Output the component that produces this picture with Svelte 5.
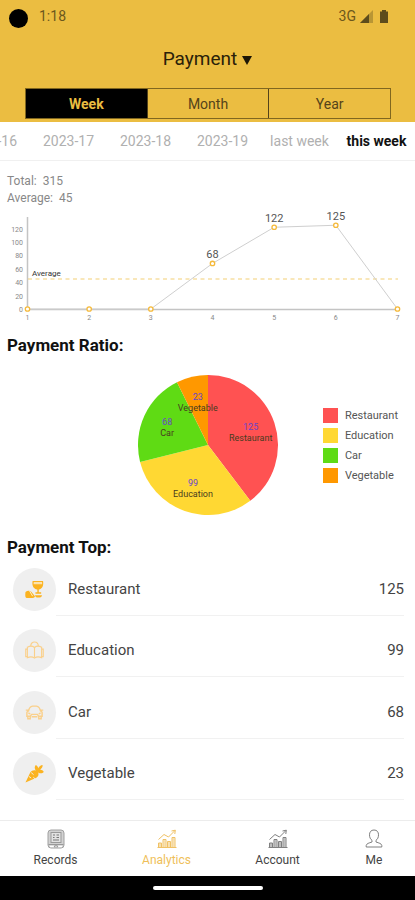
<script>
  const periods = ['Week', 'Month', 'Year'];
  const weeks = ['2023-16', '2023-17', '2023-18', '2023-19', 'last week', 'this week'];
  const daily = [0, 0, 0, 68, 122, 125, 0];
  const ticks = [0, 20, 40, 60, 80, 100, 120];
  const categories = [
    { name: 'Restaurant', value: 125, color: '#ff5252' },
    { name: 'Education', value: 99, color: '#ffd833' },
    { name: 'Car', value: 68, color: '#5fdb14' },
    { name: 'Vegetable', value: 23, color: '#ff9800' }
  ];
  const tabs = ['Records', 'Analytics', 'Account', 'Me'];

  let period = $state('Week');
  let week = $state('this week');
  let tab = $state('Analytics');

  const px = (i) => 27.5 + (i * 370) / 6;
  const py = (v) => 99 - v * 0.67;
  const line = daily.map((v, i) => `${px(i)},${py(v)}`).join(' ');

  const radius = 70;
  const sum = categories.reduce((s, c) => s + c.value, 0);
  const point = (turn, r) => {
    const a = turn * Math.PI * 2;
    return [radius + r * Math.sin(a), radius - r * Math.cos(a)];
  };
  let run = 0;
  const slices = categories.map((c) => {
    const start = run / sum;
    run += c.value;
    const end = run / sum;
    const [x1, y1] = point(start, radius);
    const [x2, y2] = point(end, radius);
    const [tx, ty] = point((start + end) / 2, 45);
    return { ...c, tx, ty, d: `M70 70L${x1} ${y1}A70 70 0 0 1 ${x2} ${y2}Z` };
  });
</script>

<div class="app">
  <header>
    <div class="status">
      <span class="camera"></span>
      <span class="time">1:18</span>
      <span class="net">3G</span>
      <svg class="signal" width="13" height="13" viewBox="0 0 13 13">
        <path d="M0 13L13 0V13Z" fill="#5d4c1c" opacity=".35" />
        <path d="M0 13L9 4V13Z" fill="#5d4c1c" />
      </svg>
      <svg width="8" height="13" viewBox="0 0 8 13">
        <path d="M2 0H6V1.500H8V13H0V1.500H2Z" fill="#5d4c1c" />
      </svg>
    </div>
    <label class="kind">
      <select aria-label="Record type"><option>Payment</option></select>
      <svg width="10" height="9" viewBox="0 0 10 9"><path d="M0 0H10L5 9Z" fill="#1c1605" /></svg>
    </label>
    <div class="segments">
      {#each periods as p}
        <button class:on={period === p} onclick={() => (period = p)}>{p}</button>
      {/each}
    </div>
  </header>

  <div class="weeks">
    {#each weeks as w}
      <button class:on={week === w} onclick={() => (week = w)}>{w}</button>
    {/each}
  </div>

  <main>
    <p class="totals">Total: &nbsp;315<br />Average: &nbsp;45</p>

    <svg class="chart" viewBox="0 0 415 118">
      <path d="M27.500 7V99.500H397.500" fill="none" stroke="#c4c4c4" stroke-width="1.500" />
      {#each ticks as t}
        <text class="tick" x="23" y={py(t) + 3} text-anchor="end">{t}</text>
      {/each}
      <path d="M28 69H398" stroke="#f3cf74" stroke-dasharray="4 3.500" />
      <text class="avg" x="32" y="66">Average</text>
      <polyline points={line} fill="none" stroke="#cfcfcf" />
      {#each daily as v, i}
        <text class="tick" x={px(i)} y="110" text-anchor="middle">{i + 1}</text>
        <circle cx={px(i)} cy={py(v)} r="2.200" fill="#fff" stroke="#f5b93a" stroke-width="1.300" />
        {#if v}
          <text class="val" x={px(i)} y={py(v) - 5} text-anchor="middle">{v}</text>
        {/if}
      {/each}
    </svg>

    <h2>Payment Ratio:</h2>
    <div class="ratio">
      <svg class="pie" width="140" height="140" viewBox="0 0 140 140">
        {#each slices as s}
          <path d={s.d} fill={s.color} />
        {/each}
        {#each slices as s}
          <text class="num" x={s.tx} y={s.ty - 1} text-anchor="middle">{s.value}</text>
          <text x={s.tx} y={s.ty + 10} text-anchor="middle">{s.name}</text>
        {/each}
      </svg>
      <ul class="legend">
        {#each categories as c}
          <li><i style="background:{c.color}"></i>{c.name}</li>
        {/each}
      </ul>
    </div>

    <h2>Payment Top:</h2>
    <ul class="top">
      {#each categories as c}
        <li>
          <span class="badge">
            <svg width="19" height="19" viewBox="0 0 20 20">
              {#if c.name === 'Restaurant'}
                <g fill="#fbb321">
                  <path d="M8 1H19C19.800 6 18.300 9.300 14.500 10V13H17V14.500H11V13H13V10C8.700 9.300 7.200 6 8 1Z" />
                  <path d="M9.200 2H17.900L18.100 4.500H9Z" fill="#fde3ac" />
                  <path d="M.5 12.500C3 10.800 5.500 11.200 7 13L10.500 17C10.200 18.500 8.500 19 6.500 19H2C.5 19 .2 17.500 .3 15Z" />
                  <path d="M4.500 11L8 17" stroke="#fff0cf" stroke-width="1" />
                  <path d="M10.500 16H18C17.500 18 16 18.500 14 18.500C12 18.500 11 18 10.500 16Z" />
                </g>
              {:else if c.name === 'Education'}
                <g fill="none" stroke="#fad08b" stroke-width="1.200">
                  <path d="M6 5.500C6 -.5 14 -.5 14 5.500" />
                  <path d="M2.500 6.500C5 5.200 8 5.200 10 6.800C12 5.200 15 5.200 17.500 6.500V17.500C15 16.500 12 16.500 10 18C8 16.500 5 16.500 2.500 17.500Z" />
                  <path d="M10 7V17.500M2.500 8.500H.8V16.500H2.500M17.500 8.500H19.200V16.500H17.500" />
                </g>
              {:else if c.name === 'Car'}
                <g fill="none" stroke="#fad08b" stroke-width="1.500">
                  <path d="M3.500 9C4.300 5 5.500 3.500 8 3.300H12C14.500 3.500 15.700 5 16.500 9" />
                  <path d="M.8 7.500H3.500L2 10V14H5.500L7 12H13L14.500 14H18V10L16.500 7.500H19.200" />
                  <path d="M3 14V16.500H5.500V14M14.500 14V16.500H17V14" />
                  <path d="M3.500 10.500L5.500 11.500M16.500 10.500L14.500 11.500M7 14.500H13" />
                </g>
              {:else}
                <path d="M.5 19.500L5.500 9C7.500 6 11 5.800 13.200 8C15 10.200 14.300 13 12 14.500Z" fill="#fbb321" />
                <path d="M12.200 7.800C9.500 5 10 2.500 11.500 1C13 1.800 13.800 3 13.800 4.600C15 2.500 16.500 1.200 18.500 1C18.800 3 17.500 4.800 15.700 6.200C17.500 6 19 6.800 19.800 8.300C18 10.200 15.500 10.500 12.200 7.800Z" fill="#fbb321" />
                <path d="M6.500 9L9 11.200M4 13L6.500 14.800M10.500 15.500L8.800 14" stroke="#efefef" stroke-width="1" />
              {/if}
            </svg>
          </span>
          <div class="row"><span>{c.name}</span><span>{c.value}</span></div>
        </li>
      {/each}
    </ul>
  </main>

  <nav>
    {#each tabs as t}
      <a href="#{t.toLowerCase()}" class:on={tab === t} class:last={t === 'Me'} onclick={() => (tab = t)}>
        <svg width="20" height="20" viewBox="0 0 20 20" fill="none" stroke={tab === t ? '#f0c164' : '#808080'}>
          {#if t === 'Records'}
            <rect x="2" y="1" width="16" height="18" rx="3" fill="#d2d2d2" stroke="#a0a0a0" />
            <rect x="5" y="3.500" width="10" height="10" fill="#e2e2e2" stroke="#999" />
            <path d="M7 6H9M10.500 6H13M7 8.500H8.500M10.500 8.500H13M7 11H13" stroke="#777" />
            <path d="M2.500 15.500H17.500" stroke="#999" />
            <path d="M4 17.500H8M12 17.500H16" stroke="#fff" stroke-width="1.500" />
            <path d="M8 18L10 15.500L12 18" stroke="#999" />
          {:else if t === 'Me'}
            <path d="M10 1C7 1 5.500 3 5.500 5.800C5.500 8.500 6.500 10.300 8 11.300V13C5 14 2.500 14.500 2.200 16.500V18H17.800V16.500C17.500 14.500 15 14 12 13V11.300C13.500 10.300 14.500 8.500 14.500 5.800C14.500 3 13 1 10 1Z" />
          {:else}
            <path d="M1.500 18.500V14H4.500V18.500M6 18.500V10.500H9V18.500M10.500 18.500V12.500H13.500V18.500M15 18.500V8.500H18V18.500M.5 18.500H19.500" />
            <path d="M3 14V18M7.500 11V18M12 13V18M16.500 9V18" stroke-width="2" opacity=".5" />
            <path d="M1.500 10.500L7 5.500L11.500 8L18 1.500M14.500 2L18.300 1.200L17.800 5" />
          {/if}
        </svg>
        <span>{t}</span>
      </a>
    {/each}
  </nav>
  <div class="gesture"><i></i></div>
</div>

<style>
  :global(body) {
    margin: 0;
    background: #fff;
  }
  .app {
    display: flex;
    flex-direction: column;
    min-height: 100vh;
    font-family: Roboto, 'Liberation Sans', sans-serif;
    color: #333;
    background: #fff;
  }
  button,
  select {
    font: inherit;
    color: inherit;
    border: 0;
    padding: 0;
    background: none;
    cursor: pointer;
  }
  ul,
  p,
  h2 {
    margin: 0;
    padding: 0;
    list-style: none;
  }
  header {
    background: #ebbd41;
    padding-bottom: 3px;
  }
  .status {
    display: flex;
    align-items: center;
    height: 32px;
    padding: 0 27px 0 9px;
    color: #6b571c;
    font-size: 14px;
  }
  .camera {
    width: 19px;
    height: 19px;
    margin-top: 4px;
    border-radius: 50%;
    background: #000;
  }
  .time {
    margin-left: 11px;
    margin-right: auto;
  }
  .signal {
    margin: 0 7px 0 4px;
  }
  .kind {
    display: flex;
    justify-content: center;
    align-items: center;
    gap: 5px;
    height: 56px;
    box-sizing: border-box;
    padding-bottom: 3px;
    color: #2a2109;
    font-size: 19px;
  }
  .kind select {
    appearance: none;
    field-sizing: content;
  }
  .kind svg {
    margin-top: 3px;
  }
  .segments {
    display: flex;
    height: 31px;
    box-sizing: border-box;
    margin: 0 24px 0 25px;
    border: 1px solid #80671f;
  }
  .segments button {
    flex: 1;
    color: #54431a;
    font-size: 14px;
  }
  .segments button + button {
    border-left: 1px solid #54431a;
  }
  .segments button.on {
    background: #000;
    color: #ebbd41;
    font-weight: 700;
  }
  .weeks {
    display: flex;
    justify-content: flex-end;
    height: 38px;
    overflow: hidden;
    border-bottom: 1px solid #f0f0f0;
  }
  .weeks button {
    flex: 0 0 77px;
    color: #b0b0b0;
    font-size: 14px;
    white-space: nowrap;
  }
  .weeks button.on {
    color: #111;
    font-weight: 700;
  }
  main {
    flex: 1;
  }
  .totals {
    padding: 12px 7px 0;
    font-size: 12px;
    line-height: 17px;
    color: #888;
  }
  .chart {
    display: block;
    width: 100%;
    margin-top: 3px;
  }
  .tick {
    font-size: 7px;
    fill: #888;
  }
  .avg {
    font-size: 8px;
    fill: #333;
  }
  .val {
    font-size: 11px;
    fill: #555;
  }
  h2 {
    margin-top: 8px;
    padding-left: 7px;
    font-size: 17px;
    line-height: 18px;
    font-weight: 700;
    color: #111;
  }
  .ratio {
    display: grid;
    grid-template-columns: 1fr 140px 1fr;
    align-items: center;
    padding: 21px 0 15px;
  }
  .pie {
    grid-column: 2;
    font-size: 9px;
    fill: #4a3b20;
  }
  .num {
    fill: #6a45c8;
  }
  .legend {
    justify-self: end;
    margin-right: 17px;
    font-size: 11px;
    color: #555;
  }
  .legend li {
    display: flex;
    align-items: center;
    gap: 7px;
    height: 20px;
  }
  .legend i {
    width: 15px;
    height: 15px;
  }
  .top {
    display: grid;
    grid-template-rows: 60px repeat(3, 1fr);
    height: 244px;
    margin-right: 11px;
    margin-bottom: 20px;
  }
  .top li {
    display: flex;
    align-items: flex-end;
    padding-left: 13px;
  }
  .badge {
    display: flex;
    align-items: center;
    justify-content: center;
    width: 43px;
    height: 43px;
    margin-bottom: 5px;
    border-radius: 50%;
    background: #efefef;
  }
  .row {
    flex: 1;
    display: flex;
    justify-content: space-between;
    padding: 0 0 4px 12px;
    border-bottom: 1px solid #f1f1f1;
    font-size: 15px;
    line-height: 43px;
    color: #444;
  }
  nav {
    display: flex;
    height: 55px;
    border-top: 1px solid #ececec;
  }
  nav a {
    flex: 111;
    display: flex;
    flex-direction: column;
    align-items: center;
    gap: 2px;
    padding-top: 8px;
    font-size: 12px;
    line-height: 18px;
    color: #444;
    text-decoration: none;
  }
  nav a.last {
    flex: 82;
  }
  nav a.on {
    color: #efbf5a;
  }
  .gesture {
    display: flex;
    justify-content: center;
    align-items: center;
    height: 24px;
    background: #000;
  }
  .gesture i {
    width: 110px;
    height: 4px;
    border-radius: 2px;
    background: #fff;
  }
</style>
